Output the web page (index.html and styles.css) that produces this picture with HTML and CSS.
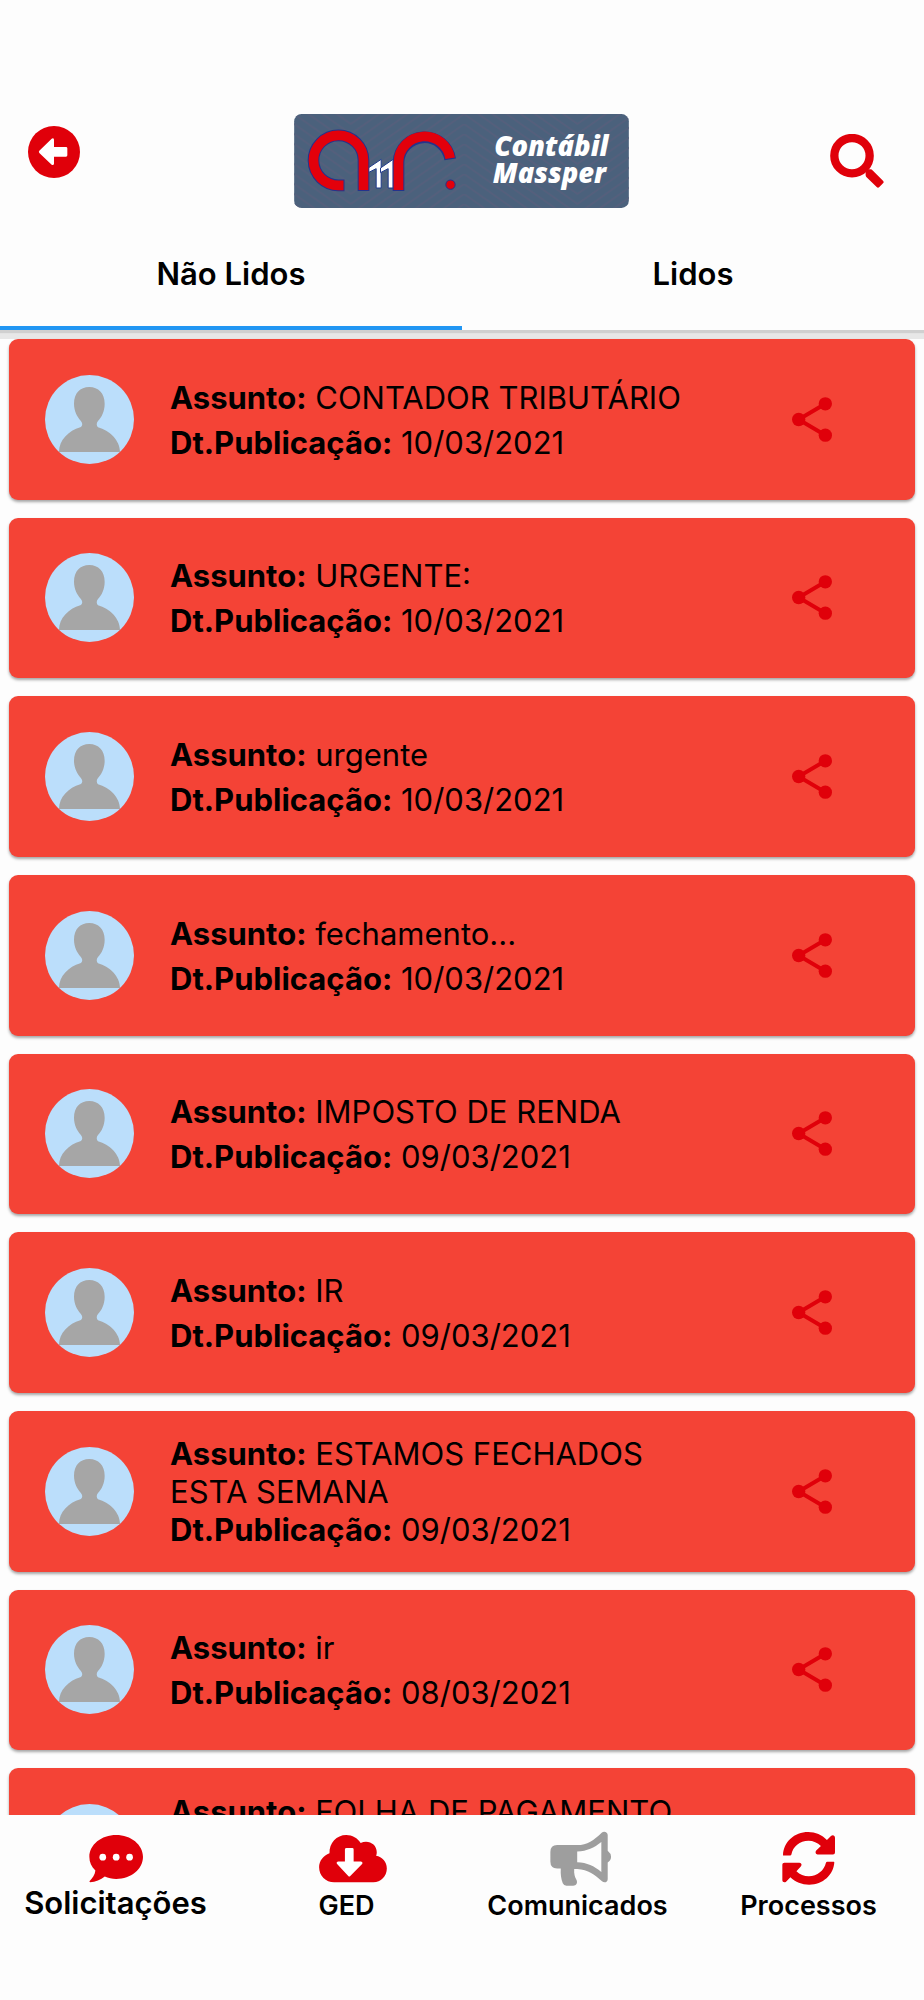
FILE: index.html
```html
<!DOCTYPE html>
<html lang="pt-BR">
<head>
<meta charset="utf-8">
<meta name="viewport" content="width=device-width, initial-scale=1">
<title>Comunicados</title>
<link rel="stylesheet" href="styles.css">
</head>
<body>
<svg class="sprite" aria-hidden="true">
  <symbol id="avatar" viewBox="0 0 267 267">
    <rect width="267" height="267" fill="#bbdefb"/>
    <path fill="#a6a6a6" d="M133 36C105 36 87 55 87 86C87 108 97 126 107 137C113 144 114 152 106 157C71 167 42 196 42 231H225C225 196 193 166 159 157C154 152 154 144 159 138C170 127 179 108 179 86C179 55 160 36 133 36Z"/>
  </symbol>
  <symbol id="share" viewBox="0 0 120 134">
    <path d="M100 20L20 67L100 114" fill="none" stroke="currentColor" stroke-width="12"/>
    <circle cx="100" cy="20" r="20"/><circle cx="20" cy="67" r="20"/><circle cx="100" cy="114" r="20"/>
  </symbol>
</svg>
<div class="app">
  <header class="header">
    <div class="bar">
      <button class="icon-button back" type="button" aria-label="Voltar">
        <svg viewBox="0 0 156 156"><circle cx="78" cy="78" r="78"/><path fill="#fff" d="M34 74L71 38Q77 35 78 41V63H114Q118 63 118 67V88Q118 92 114 92H78V113Q77 119 71 116L34 81Q31 77 34 74Z"/></svg>
      </button>
      <svg class="logo" viewBox="0 0 1004 282" role="img" aria-label="Contábil Massper">
        <defs>
          <pattern id="chevrons" width="680" height="30" patternUnits="userSpaceOnUse" patternTransform="translate(-170 0)">
            <path d="M0 -240L340 0L680 -240M0 -210L340 30L680 -210M0 -180L340 60L680 -180M0 -150L340 90L680 -150M0 -120L340 120L680 -120M0 -90L340 150L680 -90M0 -60L340 180L680 -60M0 -30L340 210L680 -30M0 0L340 240L680 0" fill="none" stroke="#555f7c" stroke-width="5"/>
          </pattern>
        </defs>
        <rect width="1004" height="282" rx="22" fill="#4b617c"/>
        <rect width="1004" height="282" rx="22" fill="url(#chevrons)"/>
        <g fill="#fff" stroke="#1f3a8c" stroke-width="3">
          <path d="M222 162L261 136V222H246V164L222 176Z"/>
          <path d="M259 162L297 136V222H282V164L259 176Z"/>
        </g>
        <g fill="none" stroke="#25338c" stroke-width="35">
          <path d="M151 214H134A75 75 0 1 1 208 139V231"/>
          <path d="M313 231V144A78 78 0 0 1 468 136"/>
        </g>
        <g fill="none" stroke="#e3000b" stroke-width="29">
          <path d="M148 214H134A75 75 0 1 1 208 139V228"/>
          <path d="M313 228V144A78 78 0 0 1 468 133"/>
        </g>
        <circle cx="469" cy="212" r="14" fill="#e3000b" stroke="#25338c" stroke-width="3"/>
        <text class="logo-text" x="600" y="126">Contábil</text>
        <text class="logo-text" x="596" y="208">Massper</text>
      </svg>
      <button class="icon-button search" type="button" aria-label="Pesquisar">
        <svg viewBox="0 0 162 162"><circle cx="66" cy="65" r="53" fill="none" stroke="currentColor" stroke-width="25"/><path d="M107 116Q107 108 115 106H121Q125 106 129 110L159 140Q163 144 159 148L148 159Q144 163 140 159L109 129Q106 126 107 116Z"/></svg>
      </button>
    </div>
    <div class="tabs" role="tablist">
      <button class="tab selected" type="button" role="tab" aria-selected="true">Não Lidos</button>
      <button class="tab" type="button" role="tab" aria-selected="false">Lidos</button>
    </div>
  </header>
  <main class="content">
    <ul class="list">
      <li class="card"><svg class="avatar"><use href="#avatar"/></svg><div class="info"><p><b>Assunto:</b> CONTADOR TRIBUTÁRIO</p><p><b>Dt.Publicação:</b> 10/03/2021</p></div><button class="share" type="button" aria-label="Compartilhar"><svg><use href="#share"/></svg></button></li>
      <li class="card"><svg class="avatar"><use href="#avatar"/></svg><div class="info"><p><b>Assunto:</b> URGENTE:</p><p><b>Dt.Publicação:</b> 10/03/2021</p></div><button class="share" type="button" aria-label="Compartilhar"><svg><use href="#share"/></svg></button></li>
      <li class="card"><svg class="avatar"><use href="#avatar"/></svg><div class="info"><p><b>Assunto:</b> urgente</p><p><b>Dt.Publicação:</b> 10/03/2021</p></div><button class="share" type="button" aria-label="Compartilhar"><svg><use href="#share"/></svg></button></li>
      <li class="card"><svg class="avatar"><use href="#avatar"/></svg><div class="info"><p><b>Assunto:</b> fechamento...</p><p><b>Dt.Publicação:</b> 10/03/2021</p></div><button class="share" type="button" aria-label="Compartilhar"><svg><use href="#share"/></svg></button></li>
      <li class="card"><svg class="avatar"><use href="#avatar"/></svg><div class="info"><p><b>Assunto:</b> IMPOSTO DE RENDA</p><p><b>Dt.Publicação:</b> 09/03/2021</p></div><button class="share" type="button" aria-label="Compartilhar"><svg><use href="#share"/></svg></button></li>
      <li class="card"><svg class="avatar"><use href="#avatar"/></svg><div class="info"><p><b>Assunto:</b> IR</p><p><b>Dt.Publicação:</b> 09/03/2021</p></div><button class="share" type="button" aria-label="Compartilhar"><svg><use href="#share"/></svg></button></li>
      <li class="card"><svg class="avatar"><use href="#avatar"/></svg><div class="info compact"><p><b>Assunto:</b> ESTAMOS FECHADOS ESTA SEMANA</p><p><b>Dt.Publicação:</b> 09/03/2021</p></div><button class="share" type="button" aria-label="Compartilhar"><svg><use href="#share"/></svg></button></li>
      <li class="card"><svg class="avatar"><use href="#avatar"/></svg><div class="info"><p><b>Assunto:</b> ir</p><p><b>Dt.Publicação:</b> 08/03/2021</p></div><button class="share" type="button" aria-label="Compartilhar"><svg><use href="#share"/></svg></button></li>
      <li class="card"><svg class="avatar"><use href="#avatar"/></svg><div class="info compact"><p><b>Assunto:</b> FOLHA DE PAGAMENTO</p><p>&nbsp;</p><p>&nbsp;</p></div><button class="share" type="button" aria-label="Compartilhar"><svg><use href="#share"/></svg></button></li>
    </ul>
  </main>
  <nav class="nav">
    <a class="item large" href="#solicitacoes">
      <svg viewBox="257 210 174 170"><path d="M347 225C391 225 427 254 427 290C427 327 391 356 347 356C335 356 323 353 313 349C301 359 285 366 269 366Q266 365 268 362C276 354 284 343 285 331C273 320 267 306 267 290C267 254 303 225 347 225Z"/><g fill="#fff"><circle cx="307" cy="291" r="10"/><circle cx="347" cy="291" r="10"/><circle cx="387" cy="291" r="10"/></g></svg>
      <span>Solicitações</span>
    </a>
    <a class="item" href="#ged">
      <svg viewBox="908 210 264 170"><path d="M1004 366C979 366 959 346 959 321C959 302 972 285 990 279C989 249 1011 225 1040 225C1058 225 1074 234 1083 249C1105 238 1131 252 1131 276Q1131 282 1129 287C1147 290 1161 305 1161 325C1161 348 1143 366 1121 366Z"/><path fill="#fff" d="M1041 264H1058Q1062 264 1062 268V304H1084Q1090 305 1088 311L1052 347Q1049 350 1046 347L1012 311Q1009 306 1015 304H1036V268Q1036 264 1041 264Z"/></svg>
      <span>GED</span>
    </a>
    <a class="item current" href="#comunicados" aria-current="page">
      <svg viewBox="247 210 213 170"><path fill-rule="evenodd" d="M292 255H352C382 255 402 240 425 218C432 212 443 216 443 225V272Q453 280 453 290Q453 301 443 307V356C443 366 433 369 426 363C405 344 385 328 352 326H343C342 341 345 350 350 359C354 368 349 376 340 376H320Q312 376 309 369C304 356 302 343 303 325H292Q272 324 272 305V275Q272 256 292 255ZM352 274V306C382 307 402 317 424 335V246C402 264 382 273 352 274Z"/></svg>
      <span>Comunicados</span>
    </a>
    <a class="item" href="#processos">
      <svg viewBox="960 210 170 170"><path d="M969 285C970 246 1003 216 1044 216C1066 216 1085 224 1100 240L1112 228C1117 223 1124 226 1124 233V277Q1124 283 1118 283H1072C1066 282 1064 276 1068 271L1082 258C1072 248 1059 242 1045 242C1019 242 998 260 994 283Q993 286 990 286H972Q969 287 969 285ZM1122 306C1120 343 1088 373 1047 373C1025 373 1006 365 991 351L978 364C973 368 967 365 967 359V313Q967 308 973 308H1018C1025 309 1026 315 1022 319L1009 333C1019 343 1032 348 1046 348C1071 348 1092 331 1097 308Q1098 305 1101 305H1119Q1122 304 1122 306Z"/></svg>
      <span>Processos</span>
    </a>
  </nav>
</div>
</body>
</html>
```
FILE: styles.css
```css
* { box-sizing: border-box; }

body {
  margin: 0;
  background: #fdfdfd;
  color: #000;
  font-family: Inter, "Liberation Sans", sans-serif;
  font-size: 31px;
  line-height: 38px;
}

button {
  padding: 0;
  border: 0;
  background: none;
  color: inherit;
  font: inherit;
}

svg { display: block; fill: currentColor; }

.sprite { position: absolute; width: 0; height: 0; }

.app { display: flex; flex-direction: column; height: 100vh; }

.header {
  flex: none;
  padding-top: 114px;
  box-shadow: 0 3px 1px #d0d0d0, 0 9px 0 #e7e7e7;
}

.bar {
  display: grid;
  grid-template-columns: 1fr 335px 1fr;
  align-items: start;
  padding: 0 40px 0 28px;
}

.icon-button { color: #e0000a; }
.back { justify-self: start; margin-top: 12px; }
.back svg { width: 52px; height: 52px; }
.search { justify-self: end; margin-top: 20px; }
.search svg { width: 54px; height: 54px; }
.logo { width: 335px; height: 94px; justify-self: center; margin-left: 11px; }
.logo-text { fill: #fff; font: italic 800 82px "Open Sans", sans-serif; }

.tabs { display: grid; grid-template-columns: 1fr 1fr; padding-top: 10px; }
.tab {
  height: 112px;
  border-top: 4px solid transparent;
  border-bottom: 4px solid transparent;
  font-weight: 600;
}
.tab.selected { border-bottom-color: #2196f3; }

.content { flex: 1; min-height: 0; padding: 9px 9px 0; overflow: hidden; }

.list {
  display: grid;
  grid-auto-rows: 1fr;
  gap: 18px;
  min-height: 1590px;
  margin: 0;
  padding: 0;
  list-style: none;
}

.card {
  display: flex;
  align-items: center;
  gap: 36px;
  padding: 0 36px;
  border-radius: 9px;
  background: #f44336;
  box-shadow: 0 2px 3px rgba(0, 0, 0, .35);
}

.avatar { flex: none; width: 89px; height: 89px; border-radius: 50%; }
.info { display: grid; flex: 1; gap: 7px; padding-top: 2px; }
.info.compact { gap: 0; }
.info p { margin: 0; font-weight: 400; }
.info b { font-weight: 700; }

.share { display: grid; place-items: center; width: 134px; height: 90px; color: #e0000a; }
.share svg { width: 40px; height: 45px; }

.nav {
  display: grid;
  flex: none;
  grid-template-columns: repeat(4, 1fr);
  height: 185px;
  padding-top: 15px;
  background: #fdfdfd;
}

.item {
  display: flex;
  flex-direction: column;
  align-items: center;
  color: #000;
  font-size: 27px;
  font-weight: 600;
  text-decoration: none;
}
.item.large { font-size: 31px; line-height: 32px; }
.item svg { height: 57px; color: #e0000a; }
.item.current svg { color: #9e9e9e; }
```
